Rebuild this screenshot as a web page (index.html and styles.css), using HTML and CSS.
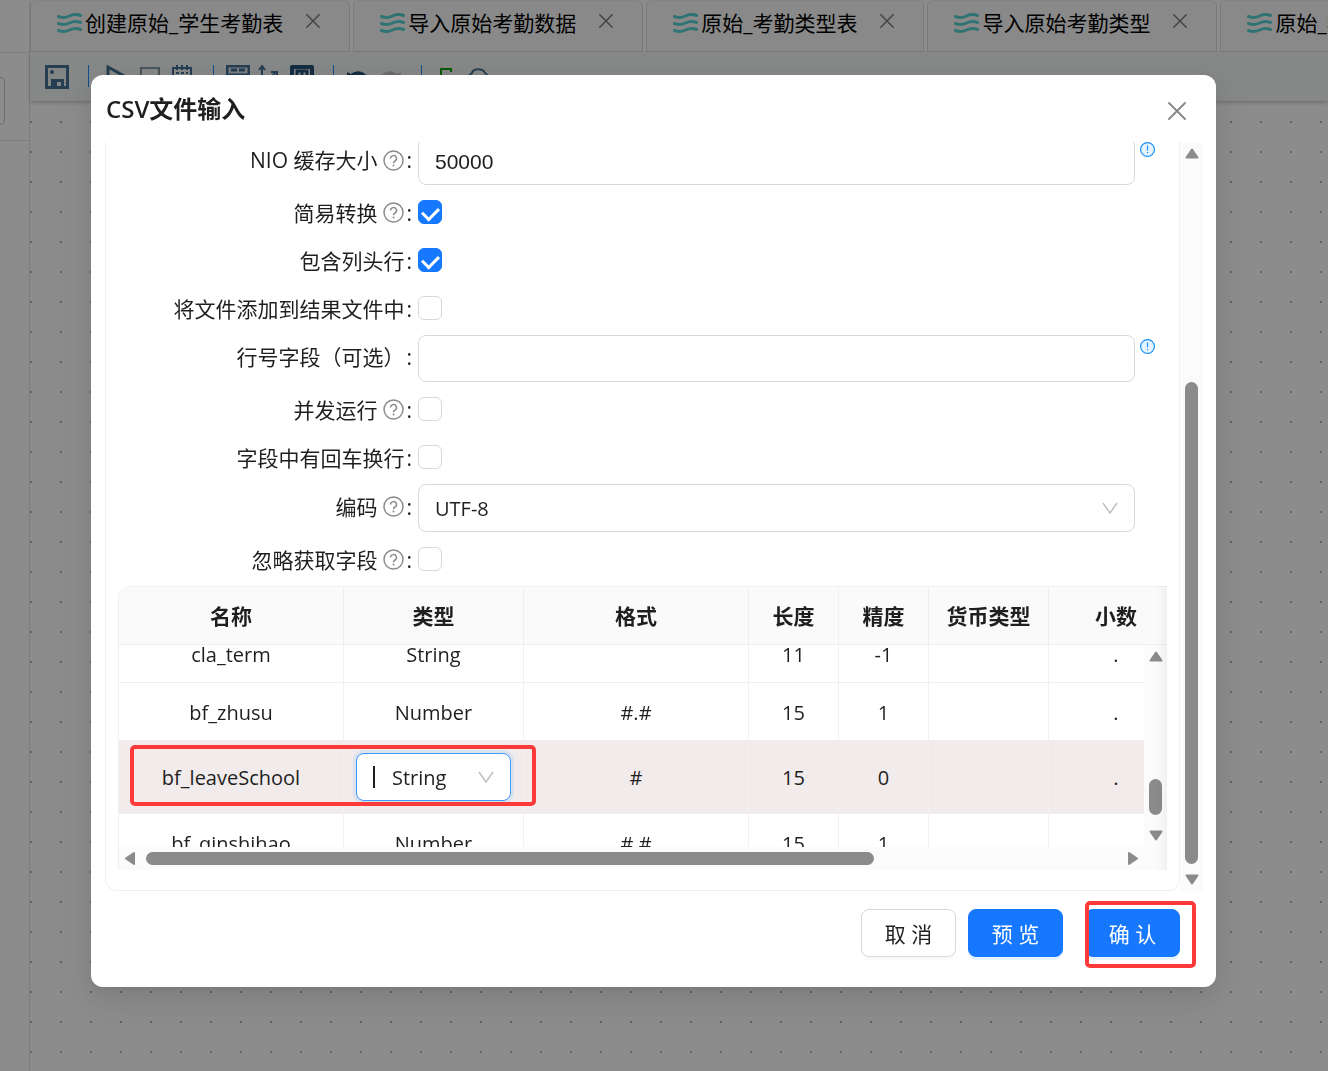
FILE: index.html
```html
<!DOCTYPE html>
<html lang="zh-CN">
<head>
    <meta charset="UTF-8">
    <meta name="viewport" content="width=device-width, initial-scale=1.0">
    <title>CSV文件输入</title>
    <link rel="stylesheet" href="styles.css">
</head>
<body>
    <!-- Shared icons -->
    <svg class="icon-defs" aria-hidden="true">
        <symbol id="wave" viewBox="0 0 25 20">
            <path d="M1.500 3.500c4 1.500 7 1.500 11-.5s7.500-2 11-.5M1.500 10.500c4 1.500 7 1.500 11-.5s7.500-2 11-.5M1.500 17.500c4 1.500 7 1.500 11-.5s7.500-2 11-.5" fill="none" stroke="#58d2d2" stroke-width="3" stroke-linecap="round"/>
        </symbol>
        <symbol id="close" viewBox="0 0 18 18">
            <path d="M1 1l16 16M17 1L1 17" fill="none" stroke="currentColor" stroke-width="1.800" stroke-linecap="round"/>
        </symbol>
        <symbol id="question" viewBox="0 0 21 21">
            <circle cx="10.500" cy="10.500" r="9.500" fill="none" stroke="currentColor" stroke-width="1.500"/>
            <path d="M7.500 8.500a3 2.900 0 1 1 4.500 2.500c-1 .6-1.500 1.100-1.500 2.300" fill="none" stroke="currentColor" stroke-width="1.500"/>
            <circle cx="10.500" cy="15.500" r="1" fill="currentColor"/>
        </symbol>
        <symbol id="info" viewBox="0 0 15 15">
            <circle cx="7.500" cy="7.500" r="6.900" fill="#e6f4ff" stroke="#1890ff" stroke-width="1.200"/>
            <path d="M7.500 3.500v5M7.500 10v1.300" stroke="#1890ff" stroke-width="1.200"/>
        </symbol>
        <symbol id="chevron" viewBox="0 0 16 12">
            <path d="M1 1l7 10 7-10" fill="none" stroke="#bfbfbf" stroke-width="1.500"/>
        </symbol>
        <symbol id="triangle" viewBox="0 0 14 11">
            <path d="M7 1.500L12.500 9.500h-11z" fill="#8b8b8b" stroke="#8b8b8b" stroke-width="2" stroke-linejoin="round"/>
        </symbol>
    </svg>

    <!-- Editor -->
    <div class="app">
        <aside class="sidebar">
            <div class="sidebar-top"></div>
            <div class="sidebar-search"><span class="search-box"></span></div>
        </aside>
        <main class="workspace">
            <nav class="tabs">
                <div class="tab">
                    <svg class="tab-icon"><use href="#wave"/></svg>
                    <span>创建原始_学生考勤表</span>
                    <button class="tab-close" aria-label="关闭"><svg><use href="#close"/></svg></button>
                </div>
                <div class="tab">
                    <svg class="tab-icon"><use href="#wave"/></svg>
                    <span>导入原始考勤数据</span>
                    <button class="tab-close" aria-label="关闭"><svg><use href="#close"/></svg></button>
                </div>
                <div class="tab">
                    <svg class="tab-icon"><use href="#wave"/></svg>
                    <span>原始_考勤类型表</span>
                    <button class="tab-close" aria-label="关闭"><svg><use href="#close"/></svg></button>
                </div>
                <div class="tab">
                    <svg class="tab-icon"><use href="#wave"/></svg>
                    <span>导入原始考勤类型</span>
                    <button class="tab-close" aria-label="关闭"><svg><use href="#close"/></svg></button>
                </div>
                <div class="tab">
                    <svg class="tab-icon"><use href="#wave"/></svg>
                    <span>原始_学生</span>
                </div>
            </nav>
            <div class="toolbar">
                <svg class="tool save" viewBox="0 0 24 24"><path d="M0 0h24v24H0z" fill="#457195"/><path d="M3 3h18v18h-2v-7H6v7H3z" fill="#eef2f0"/><circle cx="7" cy="7" r="2" fill="#457195"/><path d="M12 17h4v4h-4z" fill="#eef2f0"/></svg>
                <span class="divider"></span>
                <svg class="tool run" viewBox="0 0 24 24"><path d="M2 2l18 10L2 22z" fill="none" stroke="#457195" stroke-width="3"/></svg>
                <svg class="tool" viewBox="0 0 24 24"><path d="M3 3h18v18H3z" fill="none" stroke="#8599ad" stroke-width="2"/></svg>
                <svg class="tool" viewBox="0 0 24 24"><path d="M3 3h18v18H3z" fill="none" stroke="#457195" stroke-width="2"/><path d="M7 0v5M12 0v5M17 0v5M6 8h3M11 8h3M16 8h2" stroke="#457195" stroke-width="2"/></svg>
                <span class="divider"></span>
                <svg class="tool" viewBox="0 0 24 24"><path d="M1 1h22v9H1z" fill="#dfe6ea" stroke="#457195" stroke-width="3"/><path d="M5 5h6M13 5h6" stroke="#457195" stroke-width="3"/></svg>
                <svg class="tool" viewBox="0 0 24 24"><path d="M4 24V2M1 5l3-4 3 4M9 16l9-9M13 7h6v6" fill="none" stroke="#457195" stroke-width="2"/></svg>
                <svg class="tool" viewBox="0 0 24 24"><path d="M2 2h20v20H2z" fill="none" stroke="#245276" stroke-width="4" stroke-linejoin="round"/><path d="M7 17V6h10v11M12 6v11" fill="none" stroke="#245276" stroke-width="3"/></svg>
                <span class="divider"></span>
                <svg class="tool" viewBox="0 0 24 24"><path d="M1 7l4 2c6-5 13-3 17 3v3C17 9 12 9 7 12l2 4-8-2z" fill="#245276"/></svg>
                <svg class="tool" viewBox="0 0 24 24"><path d="M23 7l-4 2C13 4 6 6 2 12v3c5-6 10-6 15-3l-2 4 8-2z" fill="#c5c5c5"/></svg>
                <span class="divider"></span>
                <svg class="tool" viewBox="0 0 24 24"><path d="M7 12V4h10v3M4 12h16v10H4z" fill="none" stroke="#11a011" stroke-width="2"/></svg>
                <svg class="tool" viewBox="0 0 24 24"><path d="M2 22c-2-5-1-11 4-14 1-5 11-5 13 0 5 3 5 9 3 14z" fill="none" stroke="#457195" stroke-width="2"/></svg>
            </div>
            <div class="canvas"></div>
        </main>
    </div>

    <!-- Dialog -->
    <div class="overlay">
        <div class="modal" role="dialog" aria-labelledby="modal-title">
            <header class="modal-header">
                <h1 id="modal-title">CSV文件输入</h1>
                <button class="modal-close" aria-label="关闭"><svg><use href="#close"/></svg></button>
            </header>

            <div class="modal-body">
                <form class="panel" id="csv-form">
                    <div class="form-row">
                        <label for="nio">NIO 缓存大小<svg class="help"><use href="#question"/></svg><span class="colon">:</span></label>
                        <input type="text" id="nio" class="text-input" value="50000">
                        <svg class="info"><use href="#info"/></svg>
                    </div>
                    <div class="form-row check-row">
                        <label for="lazy">简易转换<svg class="help"><use href="#question"/></svg><span class="colon">:</span></label>
                        <input type="checkbox" id="lazy" class="checkbox" checked>
                    </div>
                    <div class="form-row check-row">
                        <label for="header">包含列头行<span class="colon">:</span></label>
                        <input type="checkbox" id="header" class="checkbox" checked>
                    </div>
                    <div class="form-row check-row">
                        <label for="add-result">将文件添加到结果文件中<span class="colon">:</span></label>
                        <input type="checkbox" id="add-result" class="checkbox">
                    </div>
                    <div class="form-row">
                        <label for="row-num">行号字段（可选）<span class="colon">:</span></label>
                        <input type="text" id="row-num" class="text-input">
                        <svg class="info"><use href="#info"/></svg>
                    </div>
                    <div class="form-row check-row">
                        <label for="parallel">并发运行<svg class="help"><use href="#question"/></svg><span class="colon">:</span></label>
                        <input type="checkbox" id="parallel" class="checkbox">
                    </div>
                    <div class="form-row check-row">
                        <label for="newline">字段中有回车换行<span class="colon">:</span></label>
                        <input type="checkbox" id="newline" class="checkbox">
                    </div>
                    <div class="form-row">
                        <label for="encoding">编码<svg class="help"><use href="#question"/></svg><span class="colon">:</span></label>
                        <div class="select-wrap">
                            <select id="encoding" class="select">
                                <option>UTF-8</option>
                                <option>GBK</option>
                            </select>
                            <svg class="chevron"><use href="#chevron"/></svg>
                        </div>
                    </div>
                    <div class="form-row check-row">
                        <label for="ignore">忽略获取字段<svg class="help"><use href="#question"/></svg><span class="colon">:</span></label>
                        <input type="checkbox" id="ignore" class="checkbox">
                    </div>

                    <!-- Field table -->
                    <div class="grid">
                        <div class="grid-head">
                            <table>
                                <colgroup><col class="wide"><col class="type"><col class="wide"><col class="num"><col class="num"><col class="currency"><col class="decimal"></colgroup>
                                <thead>
                                    <tr><th>名称</th><th>类型</th><th>格式</th><th>长度</th><th>精度</th><th>货币类型</th><th>小数</th></tr>
                                </thead>
                            </table>
                        </div>
                        <div class="grid-main">
                            <div class="grid-body">
                                <table>
                                    <colgroup><col class="wide"><col class="type"><col class="wide"><col class="num"><col class="num"><col class="currency"><col class="decimal"></colgroup>
                                    <tbody>
                                        <tr><td>cla_term</td><td>String</td><td></td><td>11</td><td>-1</td><td></td><td>.</td></tr>
                                        <tr><td>bf_zhusu</td><td>Number</td><td>#.#</td><td>15</td><td>1</td><td></td><td>.</td></tr>
                                        <tr class="active">
                                            <td>bf_leaveSchool<span class="mark mark-row"></span></td>
                                            <td class="edit-cell">
                                                <div class="select-wrap editing">
                                                    <select class="select" aria-label="类型">
                                                        <option>String</option>
                                                        <option>Number</option>
                                                    </select>
                                                    <span class="caret"></span>
                                                    <svg class="chevron"><use href="#chevron"/></svg>
                                                </div>
                                            </td>
                                            <td>#</td><td>15</td><td>0</td><td></td><td>.</td>
                                        </tr>
                                        <tr><td>bf_qinshihao</td><td>Number</td><td>#.#</td><td>15</td><td>1</td><td></td><td>.</td></tr>
                                    </tbody>
                                </table>
                            </div>
                            <div class="scroll-y">
                                <svg class="arrow"><use href="#triangle"/></svg>
                                <span class="thumb thumb-grid"></span>
                                <svg class="arrow down"><use href="#triangle"/></svg>
                            </div>
                        </div>
                        <div class="scroll-x">
                            <svg class="arrow left"><use href="#triangle"/></svg>
                            <div class="track-x"><span class="thumb thumb-x"></span></div>
                            <svg class="arrow right"><use href="#triangle"/></svg>
                        </div>
                    </div>
                </form>
                <div class="scroll-y">
                    <svg class="arrow"><use href="#triangle"/></svg>
                    <span class="thumb thumb-form"></span>
                    <svg class="arrow down"><use href="#triangle"/></svg>
                </div>
            </div>

            <footer class="modal-footer">
                <button class="button">取 消</button>
                <button class="button primary">预 览</button>
                <div class="confirm">
                    <button class="button primary">确 认</button>
                    <span class="mark mark-confirm"></span>
                </div>
            </footer>
        </div>
    </div>
</body>
</html>
```
FILE: styles.css
```css
/* General Styles */
* {
    box-sizing: border-box;
}

body {
    margin: 0;
    height: 100vh;
    overflow: hidden;
    font-family: "Open Sans", "Noto Sans CJK SC", sans-serif;
    font-size: 21px;
    line-height: 30px;
    color: #1f1f1f;
}

button {
    font: inherit;
    color: inherit;
    cursor: pointer;
}

svg {
    display: block;
    flex: none;
}

.icon-defs {
    position: absolute;
    width: 0;
    height: 0;
}

/* Editor behind the dialog */
.app {
    display: flex;
    height: 100vh;
    background: #fff;
}

.sidebar {
    width: 30px;
    flex: none;
    border-right: 1px solid #e4e4e4;
}

.sidebar-top {
    height: 53px;
    border-bottom: 1px solid #e8e8e8;
}

.sidebar-search {
    height: 88px;
    padding-top: 24px;
    border-bottom: 1px solid #e8e8e8;
}

.search-box {
    display: block;
    width: 5px;
    height: 48px;
    border: 1px solid #c8c8c8;
    border-left: 0;
    border-radius: 0 8px 8px 0;
}

.workspace {
    flex: 1;
    min-width: 0;
    display: flex;
    flex-direction: column;
}

.tabs {
    display: flex;
    gap: 3px;
    height: 52px;
    overflow: hidden;
    background: #fff;
}

.tab {
    display: flex;
    flex: none;
    align-items: center;
    padding: 0 29px 7px 26px;
    border: 1px solid #e0e0e0;
    border-top-color: #f0f0f0;
    border-radius: 6px 6px 0 0;
    background: #fafafa;
    color: #000;
    white-space: nowrap;
}

.tab-icon {
    width: 25px;
    height: 20px;
    margin-right: 3px;
}

.tab-close {
    margin: 0 0 3px 23px;
    padding: 0;
    border: 0;
    background: none;
    color: #777;
}

.tab-close svg {
    width: 14px;
    height: 14px;
}

.toolbar {
    display: flex;
    gap: 8px;
    height: 49px;
    flex: none;
    padding: 13px 15px;
    background: #f4f8f6;
    box-shadow: 0 2px 4px rgba(0, 0, 0, 0.2);
    z-index: 1;
}

.tool {
    width: 24px;
    height: 24px;
}

.run {
    margin-left: 5px;
}

.divider {
    width: 1px;
    height: 22px;
    margin: 0 4px 0 11px;
    background: #1890ff;
}

.canvas {
    flex: 1;
    background: #fff radial-gradient(circle at 1px 1px, #b4b4b4 1px, transparent 1px) 0 20px / 30px 30px;
}

/* Dialog */
.overlay {
    position: fixed;
    inset: 0;
    z-index: 10;
    padding: 75px 112px 84px 91px;
    background: rgba(0, 0, 0, 0.45);
}

.modal {
    border-radius: 12px;
    background: #fff;
    box-shadow: 0 9px 24px rgba(0, 0, 0, 0.08), 0 4px 9px -6px rgba(0, 0, 0, 0.12), 0 14px 42px 12px rgba(0, 0, 0, 0.05);
}

.modal-header {
    display: flex;
    justify-content: space-between;
    align-items: center;
    height: 67px;
    padding: 4px 30px 0 15px;
}

.modal-header h1 {
    margin: 0 0 4px;
    font-size: 24px;
    font-weight: 600;
    line-height: 36px;
}

.modal-close {
    padding: 0;
    border: 0;
    background: none;
    color: #858585;
}

.modal-close svg {
    width: 18px;
    height: 18px;
}

.modal-body {
    display: flex;
    height: calc(100vh - 322px);
    margin: 0 13px 0 14px;
}

.panel {
    flex: 1;
    min-width: 0;
    overflow: hidden;
    padding: 0 12px;
    border: 1px solid #f0f0f0;
    border-top: 0;
    border-radius: 0 0 12px 12px;
}

/* Form */
.form-row {
    display: flex;
    align-items: center;
    padding: 3px 32px 3px 0;
}

.form-row:first-child {
    margin-top: -7px;
}

.check-row {
    height: 48px;
}

.form-row label {
    display: flex;
    justify-content: flex-end;
    align-items: center;
    flex: none;
    width: 300px;
    padding-bottom: 3px;
}

.check-row label {
    padding: 1px 0 0;
}

.help {
    width: 21px;
    height: 21px;
    margin-left: 6px;
    color: #8c8c8c;
}

.colon {
    margin: 0 6px 0 2px;
}

.text-input {
    flex: 1;
    min-width: 0;
    height: 47px;
    padding: 0 16px;
    border: 1px solid #d9d9d9;
    border-radius: 8px;
    font-family: "Liberation Sans", Arial, sans-serif;
    font-size: 21px;
    color: #1f1f1f;
}

.info {
    width: 15px;
    height: 15px;
    align-self: flex-start;
    margin: 4px -20px 0 5px;
}

.checkbox {
    appearance: none;
    position: relative;
    width: 24px;
    height: 24px;
    margin: 0;
    border: 1px solid #d9d9d9;
    border-radius: 6px;
    background: #fff;
}

.checkbox:checked {
    border-color: #1677ff;
    background: #1677ff;
}

.checkbox:checked::after {
    content: "";
    position: absolute;
    left: 6px;
    top: 3px;
    width: 8px;
    height: 13px;
    border: solid #fff;
    border-width: 0 3px 3px 0;
    transform: rotate(45deg);
}

.select-wrap {
    position: relative;
    flex: 1;
}

.select {
    appearance: none;
    display: block;
    width: 100%;
    height: 48px;
    padding: 0 16px;
    border: 1px solid #d9d9d9;
    border-radius: 8px;
    background: #fff;
    font-family: inherit;
    font-size: 20px;
    color: #1f1f1f;
}

.chevron {
    position: absolute;
    right: 17px;
    top: 18px;
    width: 16px;
    height: 12px;
}

.editing .select {
    padding-left: 35px;
    border-color: #4096ff;
    box-shadow: 0 0 0 3px rgba(5, 145, 255, 0.1);
}

.caret {
    position: absolute;
    left: 17px;
    top: 13px;
    width: 2px;
    height: 22px;
    background: #1f1f1f;
}

/* Field Table */
.grid {
    position: relative;
    margin-top: 3px;
    overflow: hidden;
    border-left: 1px solid #f0f0f0;
    border-radius: 12px 0 0 0;
}

.grid::after {
    content: "";
    position: absolute;
    inset: 0;
    box-shadow: inset -15px 0 12px -12px rgba(5, 5, 5, 0.06);
    pointer-events: none;
}

.grid table {
    width: 1065px;
    table-layout: fixed;
    border-collapse: separate;
    border-spacing: 0;
}

.wide {
    width: 225px;
}

.type {
    width: 180px;
}

.num {
    width: 90px;
}

.currency {
    width: 120px;
}

.decimal {
    width: 135px;
}

.grid-head {
    overflow: hidden;
    border-top: 1px solid #f0f0f0;
    border-radius: 12px 0 0 0;
    background: #fafafa;
}

.grid th,
.grid td {
    height: 58px;
    padding: 0 12px;
    border-right: 1px solid #f0f0f0;
    border-bottom: 1px solid #f0f0f0;
    text-align: center;
}

.grid th {
    font-weight: 700;
}

.grid td {
    padding-top: 2px;
    font-size: 20px;
}

.grid-main {
    display: flex;
    height: 202px;
}

.grid-body {
    flex: 1;
    min-width: 0;
    overflow: hidden;
}

.grid-body table {
    margin-top: -20px;
}

.grid .active td {
    position: relative;
    height: 73px;
    border-bottom-color: #f1ebeb;
    background: #f1ebeb;
}

.grid .active .edit-cell {
    padding-top: 0;
    text-align: left;
}

/* Scrollbars */
.scroll-y {
    display: flex;
    flex-direction: column;
    align-items: center;
    flex: none;
    width: 23px;
    padding: 6px 0;
    background: #fbfbfb;
}

.scroll-x {
    display: flex;
    align-items: center;
    height: 23px;
    padding: 0 27px 0 4px;
    background: #fbfbfb;
}

.arrow {
    width: 14px;
    height: 11px;
}

.down {
    transform: rotate(180deg);
}

.left {
    transform: rotate(-90deg);
}

.right {
    transform: rotate(90deg);
}

.thumb {
    display: block;
    border-radius: 7px;
    background: #8b8b8b;
}

.thumb-form,
.thumb-grid {
    width: 13px;
    margin: auto 0 10px;
}

.thumb-form {
    height: 482px;
}

.thumb-grid {
    height: 36px;
    margin-bottom: 15px;
}

.track-x {
    flex: 1;
    padding: 0 9px;
}

.thumb-x {
    width: 75%;
    height: 13px;
}

/* Footer */
.modal-footer {
    display: flex;
    justify-content: flex-end;
    gap: 12px;
    padding: 18px 36px 30px;
}

.button {
    width: 95px;
    height: 48px;
    padding: 2px 0 0;
    border: 1px solid #d9d9d9;
    border-radius: 8px;
    background: #fff;
    box-shadow: 0 3px 0 rgba(0, 0, 0, 0.02);
}

.button.primary {
    border-color: #1677ff;
    background: #1677ff;
    color: #fff;
    box-shadow: 0 3px 0 rgba(5, 145, 255, 0.1);
}

.confirm {
    position: relative;
    margin-left: 10px;
}

/* Red highlight frames */
.mark {
    position: absolute;
    z-index: 2;
    border: 4px solid #fd3a3a;
    border-radius: 5px;
    pointer-events: none;
}

.mark-row {
    left: 11px;
    top: 4px;
    width: 406px;
    height: 61px;
}

.grid .active td:first-child {
    z-index: 2;
}

.mark-confirm {
    left: 0;
    top: -8px;
    width: 111px;
    height: 67px;
}
```
